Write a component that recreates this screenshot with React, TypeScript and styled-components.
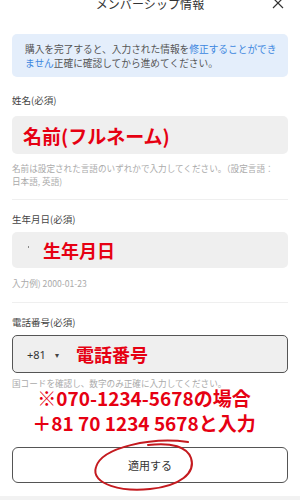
import styled, { createGlobalStyle } from "styled-components";

const GlobalStyle = createGlobalStyle`
  html, body {
    margin: 0;
    padding: 0;
    background: #ffffff;
    overflow: hidden;
  }
  body {
    font-family: "Noto Sans CJK JP", "Noto Sans", sans-serif;
    color: #333;
  }
`;

function App() {
  return (
    <>
      <GlobalStyle />
      <Page>
        <Header>
          <Title>メンバーシップ情報</Title>
          <CloseButton aria-label="close">
            <svg width="12" height="12" viewBox="0 0 12 12">
              <path d="M1 1 L11 11 M11 1 L1 11" stroke="#333" strokeWidth="1.2" fill="none" />
            </svg>
          </CloseButton>
        </Header>

        <InfoBox>
          購入を完了すると、入力された情報を<Link>修正することができ</Link>
          <br />
          <Link>ません</Link>正確に確認してから進めてください。
        </InfoBox>

        <Label $top={16}>姓名(必須)</Label>
        <Input $top={9} $height={38}>
          <RedText $size={19}>名前(フルネーム)</RedText>
        </Input>
        <Help $top={7.5}>
          名前は設定された言語のいずれかで入力してください。（設定言語：
          <br />
          日本語, 英語)
        </Help>
        <Divider $top={11.5} />

        <Label $top={12}>生年月日(必須)</Label>
        <Input $top={6} $height={36}>
          <Caret />
          <RedText $size={18}>生年月日</RedText>
        </Input>
        <Help $top={8.5}>入力例) 2000-01-23</Help>
        <Divider $top={12.5} />

        <Label $top={12}>電話番号(必須)</Label>
        <Input $top={6} $height={38} $bordered>
          <CountryCode>
            +81 <Arrow>▾</Arrow>
          </CountryCode>
          <RedText $size={18}>電話番号</RedText>
        </Input>
        <Help $top={3.5}>国コードを確認し、数字のみ正確に入力してください。</Help>

        <Note>
          <NoteLine>※070-1234-5678の場合</NoteLine>
          <NoteLine>＋81 70 1234 5678と入力</NoteLine>
        </Note>

        <ButtonWrap>
          <ApplyButton>適用する</ApplyButton>
          <Circle width="276" height="64" viewBox="0 0 276 64">
            <path
              d="M 176 5 C 140 0, 90 10, 84 30 C 78 48, 112 55, 138 52 C 168 49, 184 36, 179 21 C 175 10, 160 5, 136 8"
              stroke="#c41a1f"
              strokeWidth="2"
              fill="none"
              strokeLinecap="round"
            />
          </Circle>
        </ButtonWrap>
      </Page>
      <Footer />
    </>
  );
}

export default App;

const Page = styled.div`
  margin-top: -11px;
  padding: 0 12px;
  height: 507px;
  box-sizing: border-box;
  display: flex;
  flex-direction: column;
`;

const Header = styled.div`
  height: 28px;
  display: flex;
  align-items: center;
  justify-content: center;
  position: relative;
  flex-shrink: 0;
`;

const Title = styled.div`
  font-size: 12px;
  color: #333;
  letter-spacing: 0.1px;
`;

const CloseButton = styled.div`
  position: absolute;
  right: 4px;
  top: 8px;
  display: flex;
`;

const InfoBox = styled.div`
  margin-top: 17px;
  background: #e4eefb;
  border-radius: 5px;
  padding: 8px 13px 7px;
  font-size: 9.7px;
  line-height: 14px;
  color: #555;
  white-space: nowrap;
`;

const Link = styled.span`
  color: #3d87e0;
`;

const Label = styled.div<{ $top: number }>`
  margin-top: ${(p) => p.$top}px;
  font-size: 9.5px;
  line-height: 14px;
  color: #444;
`;

const Input = styled.div<{ $top: number; $height: number; $bordered?: boolean }>`
  margin-top: ${(p) => p.$top}px;
  height: ${(p) => p.$height}px;
  box-sizing: border-box;
  background: #efefef;
  border-radius: 5px;
  border: ${(p) => (p.$bordered ? "1px solid #555" : "none")};
  display: flex;
  align-items: center;
  padding-left: ${(p) => (p.$bordered ? 14 : 11)}px;
  flex-shrink: 0;
`;

const RedText = styled.span<{ $size: number }>`
  color: #e60012;
  font-weight: 700;
  font-size: ${(p) => p.$size}px;
  line-height: 1;
`;

const Caret = styled.span`
  width: 1px;
  height: 2px;
  background: #888;
  margin: -6px 14px 0 5px;
`;

const CountryCode = styled.span`
  font-size: 11px;
  color: #333;
  font-family: "Noto Sans", "Noto Sans CJK JP", sans-serif;
  margin-right: 17px;
  display: flex;
  align-items: center;
`;

const Arrow = styled.span`
  font-size: 8px;
  margin-left: 9px;
  color: #444;
`;

const Help = styled.div<{ $top: number }>`
  margin-top: ${(p) => p.$top}px;
  font-size: 8.6px;
  line-height: 13px;
  color: #aaa;
  white-space: nowrap;
`;

const Divider = styled.div<{ $top: number }>`
  margin-top: ${(p) => p.$top}px;
  height: 1px;
  background: #efefef;
  flex-shrink: 0;
`;

const Note = styled.div`
  margin-top: -3px;
  padding-right: 12px;
  display: flex;
  flex-direction: column;
  align-items: center;
  gap: 4px;
  color: #e60012;
  font-weight: 700;
  font-size: 19px;
  font-family: "Noto Sans CJK JP", sans-serif;
`;

const NoteLine = styled.div`
  line-height: 21px;
  white-space: nowrap;
`;

const ButtonWrap = styled.div`
  margin-top: 14px;
  position: relative;
`;

const ApplyButton = styled.div`
  height: 36px;
  box-sizing: border-box;
  border: 1px solid #555;
  border-radius: 6px;
  display: flex;
  align-items: center;
  justify-content: center;
  font-size: 11px;
  color: #333;
`;

const Circle = styled.svg`
  position: absolute;
  left: 0;
  top: -10px;
  pointer-events: none;
`;

const Footer = styled.div`
  position: fixed;
  left: 0;
  right: 0;
  bottom: 0;
  height: 4px;
  background: #f2f2f2;
`;
